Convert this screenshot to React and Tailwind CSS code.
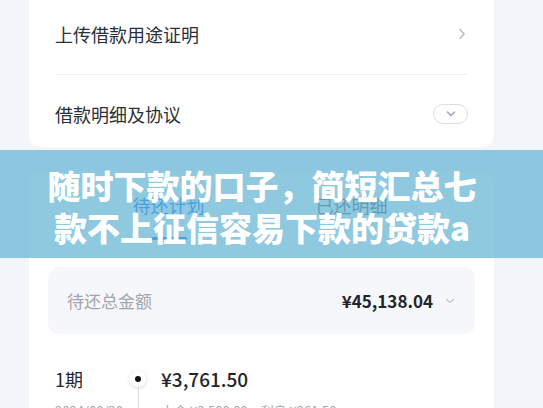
import React from "react";

const font = { fontFamily: '"Noto Sans CJK SC", "Noto Sans", sans-serif' };

export default function App() {
  return (
    <div
      className="relative w-[543px] h-[408px] overflow-hidden bg-[#f3f5fa]"
      style={font}
    >
      <div className="ml-[29px] w-[465px]">
        {/* Card 1 */}
        <div className="h-[147px] bg-white rounded-b-[12px] px-[26px] flex flex-col">
          <div className="h-[74px] flex items-center justify-between pb-[6px]">
            <span className="text-[18px] leading-[24px] text-[#2b2f38]">上传借款用途证明</span>
            <svg width="8" height="12" viewBox="0 0 8 12" className="mr-[2px]">
              <path d="M2 1.5 L6 6 L2 10.5" fill="none" stroke="#b9bcc6" strokeWidth="1.6" strokeLinecap="round" strokeLinejoin="round" />
            </svg>
          </div>
          <div className="h-px bg-[#eceef3]" />
          <div className="flex-1 flex items-center justify-between pt-[6px]">
            <span className="text-[18px] leading-[24px] text-[#2b2f38]">借款明细及协议</span>
            <div className="w-[35px] h-[20px] rounded-full border border-[#dddde8] flex items-center justify-center">
              <svg width="10" height="6" viewBox="0 0 10 6">
                <path d="M1.5 1.2 L5 4.5 L8.5 1.2" fill="none" stroke="#aeb1c0" strokeWidth="1.8" strokeLinecap="round" strokeLinejoin="round" />
              </svg>
            </div>
          </div>
        </div>

        {/* Card 2 */}
        <div className="mt-[25px] h-[300px] bg-white rounded-[12px] px-[19px]">
          <div className="flex justify-center gap-[111px] pr-[3px]">
            <div className="flex flex-col items-center">
              <span className="mt-[21px] text-[18px] leading-[24px] text-[#1677ff]">待还计划</span>
              <div className="mt-[20px] w-[36px] h-[3px] rounded-full bg-[#1677ff]" />
            </div>
            <div className="flex flex-col items-center">
              <span className="mt-[21px] text-[18px] leading-[24px] text-[#666a73]">已还明细</span>
            </div>
          </div>

          <div className="mt-[27px] h-[67px] rounded-[10px] bg-[#f6f7fa] flex items-center justify-between pl-[19px] pr-[20px]">
            <span className="text-[17px] leading-[24px] text-[#a2a5ad]">待还总金额</span>
            <div className="flex items-center gap-[12px]">
              <span className="text-[17px] leading-[24px] font-bold text-[#22252b]">¥45,138.04</span>
              <svg width="10" height="6" viewBox="0 0 10 6">
                <path d="M1.5 1.2 L5 4.5 L8.5 1.2" fill="none" stroke="#c4c7cf" strokeWidth="1.3" strokeLinecap="round" strokeLinejoin="round" />
              </svg>
            </div>
          </div>

          <div className="mt-[33px] flex pl-[7px]">
            <div className="w-[75px] flex flex-col">
              <span className="text-[18px] leading-[24px] text-[#22252b]">1期</span>
              <span className="mt-[11px] text-[13px] leading-[18px] text-[#a2a5ad]">2024/08/20</span>
            </div>
            <div className="w-[16px] flex flex-col items-center">
              <div className="mt-[4px] w-[16px] h-[16px] rounded-full bg-white shadow-[0_1px_4px_rgba(0,0,0,0.15)] flex items-center justify-center">
                <div className="w-[6px] h-[6px] rounded-full bg-[#111]" />
              </div>
              <div className="w-px h-[60px] bg-[#d6d9e0]" />
            </div>
            <div className="ml-[15px] flex flex-col">
              <span className="text-[19px] leading-[24px] font-medium text-[#22252b]">¥3,761.50</span>
              <span className="mt-[11px] text-[13px] leading-[18px] text-[#a2a5ad]">本金 ¥3,500.00　利息 ¥261.50</span>
            </div>
          </div>
        </div>
      </div>

      {/* Overlay banner */}
      <div className="absolute left-0 top-[150px] w-[543px] h-[108px] bg-[rgba(95,178,211,0.7)] flex flex-col items-center justify-center pr-[19px] pt-[4px]">
        <div className="text-white font-black text-[33px] leading-[42px] whitespace-nowrap">随时下款的口子，简短汇总七</div>
        <div className="text-white font-black text-[33px] leading-[42px] whitespace-nowrap">款不上征信容易下款的贷款a</div>
      </div>
    </div>
  );
}
